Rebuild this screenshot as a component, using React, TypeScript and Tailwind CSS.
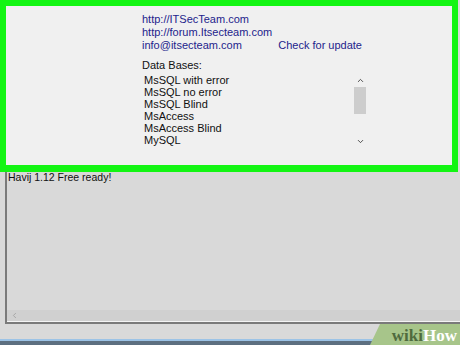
import { ChevronUp, ChevronDown, ChevronLeft } from "lucide-react"

const dbs = ["MsSQL with error", "MsSQL no error", "MsSQL Blind", "MsAccess", "MsAccess Blind", "MySQL"]

export default function App() {
  return (
    <div className="w-[460px] h-[345px] relative overflow-hidden bg-[#d9d9d9] font-['Liberation_Sans',sans-serif] text-[11px] text-[#111]">
      {/* highlighted about panel */}
      <div className="relative z-10 w-[458px] h-[172px] border-[6px] border-b-[7px] border-[#13f513] bg-[#f0f0f0]">
        <div className="pl-[136px] pt-[7px] w-[358px]">
          <div className="text-[#23238c] leading-[13px]">
            <div>http://ITSecTeam.com</div>
            <div>http://forum.Itsecteam.com</div>
            <div className="flex justify-between pr-[2px]">
              <span>info@itsecteam.com</span>
              <span>Check for update</span>
            </div>
          </div>
          <div className="mt-[7px] leading-[13px]">Data Bases:</div>
          <div className="flex mt-[2px]">
            <div className="flex-1 pl-[2px] leading-[12px]">
              {dbs.map((d) => (
                <div key={d}>{d}</div>
              ))}
            </div>
            <div className="w-[12px] flex flex-col items-center mr-[-2px]">
              <ChevronUp size={9} strokeWidth={2.2} className="text-[#333] mt-[2px]" />
              <div className="w-[12px] h-[27px] bg-[#cdcdcd] mt-[2px]" />
              <ChevronDown size={9} strokeWidth={2.2} className="text-[#333] mt-[23px]" />
            </div>
          </div>
        </div>
      </div>

      {/* log area */}
      <div className="ml-[5px] h-[152px] border-l-[2px] border-b-[2px] border-[#7a7a7a] flex flex-col">
        <div className="flex-1 overflow-hidden pl-[1px]">
          <div className="leading-[11px] text-[10.5px]">Havij 1.12 Free ready!</div>
        </div>
        <div className="h-[12px] bg-[#d0d0d0] flex items-center pl-[3px] border-b border-[#f4f4f4]">
          <ChevronLeft size={9} strokeWidth={2} className="text-[#9a9a9a]" />
        </div>
      </div>

      {/* status bar */}
      <div className="absolute left-0 right-0 bottom-0 h-[6px] border-t-[2px] border-[#9cc3e6] bg-[#5d6f80]" />

      {/* wikiHow watermark */}
      <div className="absolute right-0 bottom-0 h-[21px] w-[90px] bg-[#a7c58a] [clip-path:polygon(10px_0,100%_0,100%_100%,0_100%)] flex items-center justify-end pr-[3px] pt-[2px] font-['Liberation_Serif',serif] font-bold text-[17px] leading-none">
        <span className="text-[#4f6b3e]">wiki</span>
        <span className="text-white">How</span>
      </div>
    </div>
  )
}
